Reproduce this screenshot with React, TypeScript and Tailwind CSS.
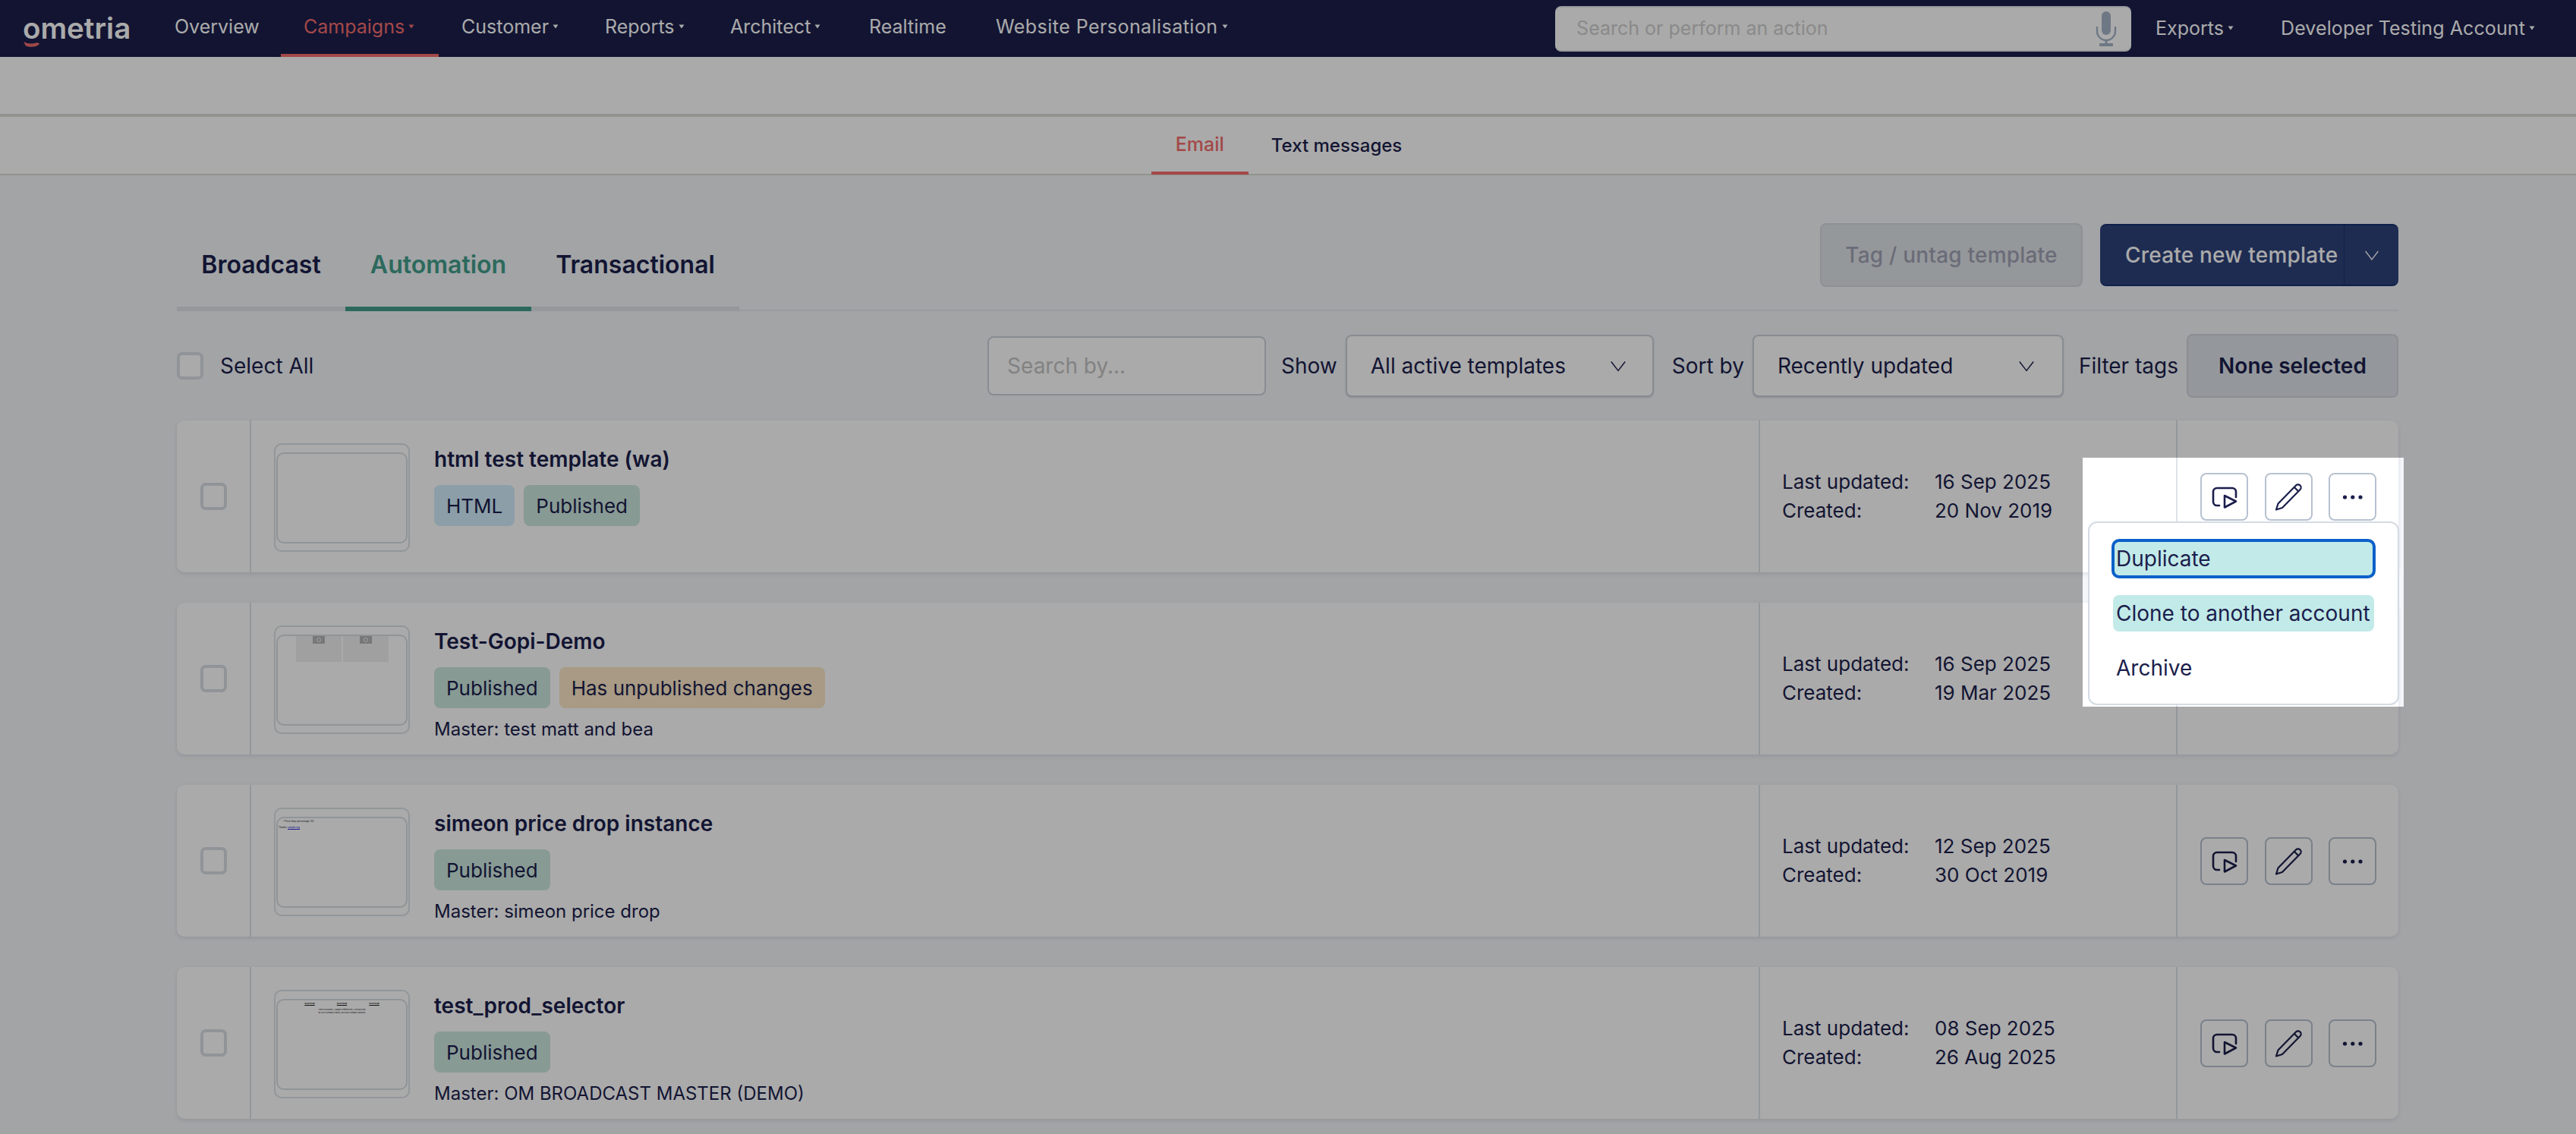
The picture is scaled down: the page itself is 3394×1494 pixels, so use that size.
import React from 'react';

const navItems = [
  { label: 'Overview', width: 'w-[170px]' },
  { label: 'Campaigns', caret: true, active: true, width: 'w-[208px]' },
  { label: 'Customer', caret: true, width: 'w-[189px]' },
  { label: 'Reports', caret: true, width: 'w-[165px]' },
  { label: 'Architect', caret: true, width: 'w-[183px]' },
  { label: 'Realtime', width: 'w-[167px]' },
  { label: 'Website Personalisation', caret: true, width: 'w-[340px] tracking-[0.45px]' },
];

interface Template {
  title: string;
  badges: { label: string; tone: string }[];
  master?: string;
  updated: string;
  created: string;
  preview: 'none' | 'images' | 'price' | 'footer';
}

const templates: Template[] = [
  {
    title: 'html test template (wa)',
    badges: [
      { label: 'HTML', tone: 'bg-[#d3eefc]' },
      { label: 'Published', tone: 'bg-[#cde7df]' },
    ],
    updated: '16 Sep 2025',
    created: '20 Nov 2019',
    preview: 'none',
  },
  {
    title: 'Test-Gopi-Demo',
    badges: [
      { label: 'Published', tone: 'bg-[#cde7df]' },
      { label: 'Has unpublished changes', tone: 'bg-[#fde8c7]' },
    ],
    master: 'Master: test matt and bea',
    updated: '16 Sep 2025',
    created: '19 Mar 2025',
    preview: 'images',
  },
  {
    title: 'simeon price drop instance',
    badges: [{ label: 'Published', tone: 'bg-[#cde7df]' }],
    master: 'Master: simeon price drop',
    updated: '12 Sep 2025',
    created: '30 Oct 2019',
    preview: 'price',
  },
  {
    title: 'test_prod_selector',
    badges: [{ label: 'Published', tone: 'bg-[#cde7df]' }],
    master: 'Master: OM BROADCAST MASTER (DEMO)',
    updated: '08 Sep 2025',
    created: '26 Aug 2025',
    preview: 'footer',
  },
];

function Caret() {
  return (
    <svg width="8" height="6" viewBox="0 0 8 6" className="ml-[5px] mb-[2px] shrink-0">
      <path d="M0.5 0.5H7.5L4 5.5Z" fill="currentColor" />
    </svg>
  );
}

function Chevron({ size = 24 }: { size?: number }) {
  return (
    <svg width={size} height={size} viewBox="0 0 24 24" fill="none" stroke="currentColor" strokeWidth="1.6">
      <path d="M2 6l10 13L22 6" />
    </svg>
  );
}

function Thumb({ preview }: { preview: Template['preview'] }) {
  return (
    <div className="w-[179px] h-[143px] rounded-[10px] border-2 border-[#dbe1e6] pt-[10px] pb-[10px] px-[1px]">
      <div className="h-[120px] rounded-[10px] border-2 border-[#d8dee3] overflow-hidden">
        {preview === 'images' && (
          <div className="flex gap-[2px] pl-[24px]">
            {[0, 1].map(i => (
              <div key={i} className="w-[60px] h-[34px] bg-[#f0f0f0] flex justify-center">
                <div className="w-[16px] h-[10px] bg-[#b4b4b4] flex items-center justify-center">
                  <div className="w-[6px] h-[6px] rounded-full border border-[#f4f4f4]"></div>
                </div>
              </div>
            ))}
          </div>
        )}
        {preview === 'price' && (
          <div className="text-[3px] leading-[8px] text-[#222] whitespace-nowrap">
            <div className="pl-[7px]">• Price drop percentage: 5%</div>
            <div className="pl-[1px]">
              Thanks: <span className="text-[#2222dd] underline">sample.org</span>
            </div>
          </div>
        )}
        {preview === 'footer' && (
          <div className="text-[#222] pt-[2px] whitespace-nowrap">
            <div className="flex justify-center text-[2.4px] leading-[6px] font-bold underline">
              <span className="w-[42.500px] text-center">SHOP NOW</span>
              <span className="w-[42.500px] text-center">SHOP NOW</span>
              <span className="w-[42.500px] text-center">SHOP NOW</span>
            </div>
            <div className="mt-[3px] text-center text-[2.500px] leading-[4px]">
              <div>View in browser | Update Preferences | Unsubscribe</div>
              <div>© 2025 company name | physical company address</div>
            </div>
          </div>
        )}
      </div>
    </div>
  );
}

function ActionButtons() {
  return (
    <div className="flex gap-[21.5px] text-[#1b1e4c]">
      <button className="w-[63px] h-[63px] rounded-[8px] border-2 border-[#b7c2d0] bg-white">
        <svg width="59" height="59" viewBox="0 0 59 59" fill="none" stroke="currentColor" strokeWidth="2.6" strokeLinecap="round" strokeLinejoin="round">
          <path d="M23 41H20a5 5 0 0 1-5-5V23a5 5 0 0 1 5-5h20a5 5 0 0 1 5 5v7" />
          <path d="M30 28l15 7.5L30 43.500z" />
        </svg>
      </button>
      <button className="w-[63px] h-[63px] rounded-[8px] border-2 border-[#b7c2d0] bg-white">
        <svg width="59" height="59" viewBox="0 0 59 59" fill="none" stroke="currentColor" strokeWidth="2.2" strokeLinejoin="round">
          <path d="M13 46.500l2.500-8L39 14.500a3.800 3.800 0 0 1 5.500 5.500L21 44z" />
          <path d="M37 17l5.500 5.500" />
        </svg>
      </button>
      <button className="w-[63px] h-[63px] rounded-[8px] border-2 border-[#b7c2d0] bg-white">
        <svg width="59" height="59" viewBox="0 0 59 59" fill="currentColor">
          <circle cx="19.500" cy="30" r="2.600" />
          <circle cx="29.800" cy="30" r="2.600" />
          <circle cx="40" cy="30" r="2.600" />
        </svg>
      </button>
    </div>
  );
}

function Checkbox() {
  return <div className="w-[35px] h-[36px] rounded-[7px] border-[4px] border-[#d8dee5] bg-white"></div>;
}

function TemplateCard({ t }: { t: Template }) {
  return (
    <div className="flex h-[200px] rounded-[10px] bg-white shadow-[0_2px_5px_rgba(50,60,90,0.12)]">
      <div className="w-[98px] shrink-0 pl-[31px] flex items-center border-r-2 border-[#dfe3e8]">
        <Checkbox />
      </div>
      <div className="w-[1988px] shrink-0 pl-[30px] pt-[30px] flex border-r-2 border-[#dfe3e8]">
        <Thumb preview={t.preview} />
        <div className="ml-[32px] flex flex-col">
          <div className="h-[44px] -mt-[1px] flex items-center text-[28px] font-semibold leading-none">{t.title}</div>
          <div className="flex gap-[12px] mt-[12px]">
            {t.badges.map(b => (
              <span key={b.label} className={`h-[54px] px-[16px] rounded-[8px] text-[26px] flex items-center ${b.tone}`}>
                {b.label}
              </span>
            ))}
          </div>
          {t.master && <div className="mt-[12px] text-[24px] leading-[32px]">{t.master}</div>}
        </div>
      </div>
      <div className="w-[550px] shrink-0 pl-[29px] flex items-center border-r-2 border-[#dfe3e8]">
        <div className="grid grid-cols-[201px_auto] text-[26px] leading-[38px]">
          <span>Last updated:</span>
          <span>{t.updated}</span>
          <span>Created:</span>
          <span>{t.created}</span>
        </div>
      </div>
      <div className="flex-1 pl-[30px] flex items-center">
        <ActionButtons />
      </div>
    </div>
  );
}

export default function App() {
  return (
    <div className="relative w-[3394px] h-[1494px] overflow-hidden bg-[#f4f6f9] text-[#1b1e4c] font-['Inter','Liberation_Sans',sans-serif]">
      {/* Header */}
      <div className="h-[75px] bg-[#1b1e4c] text-white flex items-center relative">
        <div className="w-[200px] pl-[30px] relative shrink-0 -mt-[2px]">
          <span className="text-[38.5px] font-semibold leading-[44px]">ometria</span>
          <svg width="26" height="10" viewBox="0 0 26 10" className="absolute left-[30px] top-[39px]">
            <path d="M1 1l5 2 6 0.500 8-1.500 2 2c-4 4-12 5-18 2.500z" fill="#ee6d6d" />
          </svg>
        </div>
        {navItems.map(n => (
          <div
            key={n.label}
            className={`h-[75px] pl-[30px] shrink-0 flex items-center text-[25px] border-b-[4px] whitespace-nowrap ${n.width} ${
              n.active ? 'text-[#f56d6d] border-[#f56d6d]' : 'border-transparent'
            }`}
          >
            {n.label}
            {n.caret && <Caret />}
          </div>
        ))}
        <div className="ml-auto flex items-center pr-[54px]">
          <div className="w-[759px] h-[60px] rounded-[8px] bg-white border-y-2 border-[#e4e8ee] flex items-center justify-between pl-[28px] pr-[18px] mr-[32px]">
            <span className="text-[25px] text-[#cfcfcf]">Search or perform an action</span>
            <svg width="30" height="46" viewBox="0 0 30 46" fill="#a5b5c8">
              <rect x="9" y="0" width="12" height="31" rx="6" />
              <path d="M3 20v6a12 12 0 0 0 24 0v-6" fill="none" stroke="#a5b5c8" strokeWidth="2.4" />
              <path d="M15 38v5" stroke="#a5b5c8" strokeWidth="3" />
              <rect x="6" y="42" width="18" height="4" rx="1" />
            </svg>
          </div>
          <div className="flex items-center text-[25px] mr-[62px]">
            Exports
            <Caret />
          </div>
          <div className="flex items-center text-[25px] tracking-[0.1px]">
            Developer Testing Account
            <Caret />
          </div>
        </div>
      </div>

      {/* Empty band */}
      <div className="h-[79px] bg-white border-b-[4px] border-[#dbdbd5]"></div>

      {/* Email / text tabs */}
      <div className="h-[77px] bg-white border-b-2 border-[#dbdbd5] flex justify-center text-[24px] font-medium">
        <div className="h-[76px] px-[32px] pt-[2px] flex items-center text-[25px] text-[#f56d6d] border-b-[4px] border-[#f56d6d]">Email</div>
        <div className="h-[76px] px-[30px] flex items-center">Text messages</div>
      </div>

      <div className="pl-[233px] pr-[234px]">
        {/* Template tabs + buttons */}
        <div className="mt-[63px] h-[116px] flex justify-between border-b-2 border-[#e7e9ee]">
          <div className="flex items-end text-[32px] font-semibold -mb-[2px]">
            <div className="w-[222px] h-[116px] flex items-center justify-center border-b-[6px] border-[#dfe4e8]">Broadcast</div>
            <div className="w-[245px] h-[116px] flex items-center justify-center border-b-[6px] border-[#429e8c] text-[#429e8c]">Automation</div>
            <div className="w-[274px] h-[116px] flex items-center justify-center border-b-[6px] border-[#dfe4e8]">Transactional</div>
          </div>
          <div className="flex gap-[23px]">
            <div className="w-[346px] h-[84px] rounded-[8px] bg-[#e0e4e9] border-2 border-[#d5d9df] flex items-center justify-center text-[28px] tracking-[0.2px] font-medium text-[#a0a2b4]">
              Tag / untag template
            </div>
            <div className="w-[393px] h-[82px] mt-[1px] rounded-[8px] bg-[#2e427c] border-y-2 border-[#18306f] text-white flex items-center">
              <div className="w-[321px] pl-[33px] text-[28px] tracking-[0.2px] font-medium whitespace-nowrap">Create new template</div>
              <div className="flex-1 h-full border-l border-[#18306f] flex items-center justify-center">
                <Chevron size={20} />
              </div>
            </div>
          </div>
        </div>

        {/* Filter row */}
        <div className="mt-[30px] h-[84px] flex items-center text-[28px]">
          <Checkbox />
          <span className="ml-[22px]">Select All</span>
          <div className="ml-auto w-[367px] h-[78px] rounded-[8px] bg-white border-2 border-[#ccd2da] flex items-center pl-[24px] text-[#c4c4c4]">
            Search by...
          </div>
          <span className="ml-[20px] mr-[11px]">Show</span>
          <div className="w-[406px] h-[82px] rounded-[8px] bg-white border-2 border-[#ccd2da] shadow-[0_1px_2px_rgba(50,60,90,0.2)] flex items-center justify-between pl-[31px] pr-[34px]">
            All active templates
            <Chevron size={22} />
          </div>
          <span className="ml-[24px] mr-[11px]">Sort by</span>
          <div className="w-[410px] h-[82px] rounded-[8px] bg-white border-2 border-[#ccd2da] shadow-[0_1px_2px_rgba(50,60,90,0.2)] flex items-center justify-between pl-[31px] pr-[36px]">
            Recently updated
            <Chevron size={22} />
          </div>
          <span className="ml-[20px] mr-[11px]">Filter tags</span>
          <div className="w-[279px] h-[84px] rounded-[8px] bg-[#dfe4ea] border-2 border-[#d0d5dc] flex items-center justify-center font-semibold">
            None selected
          </div>
        </div>

        {/* Template list */}
        <div className="mt-[30px] flex flex-col gap-[40px]">
          {templates.map(t => (
            <TemplateCard key={t.title} t={t} />
          ))}
        </div>
      </div>

      {/* Dim layer with the highlighted area */}
      <div className="absolute left-[2744px] top-[603px] w-[423px] h-[328px] shadow-[0_0_0_4000px_rgba(0,0,0,0.333)]"></div>

      {/* Actions menu */}
      <div className="absolute left-[2751px] top-[687px] w-[410px] h-[242px] rounded-[12px] border-2 border-[#d3dbe3] bg-white pt-[23px] pl-[31px] pr-[31px] text-[28px] flex flex-col gap-[24px]">
        <div className="h-[48px] pl-[4px] flex items-center rounded-[8px] bg-[#c2eae8] outline-4 -outline-offset-2 outline-[#0b60c9]">Duplicate</div>
        <div className="h-[48px] pl-[4px] flex items-center rounded-[8px] bg-[#c2eae8] whitespace-nowrap">Clone to another account</div>
        <div className="h-[48px] pl-[4px] flex items-center">Archive</div>
      </div>
    </div>
  );
}
